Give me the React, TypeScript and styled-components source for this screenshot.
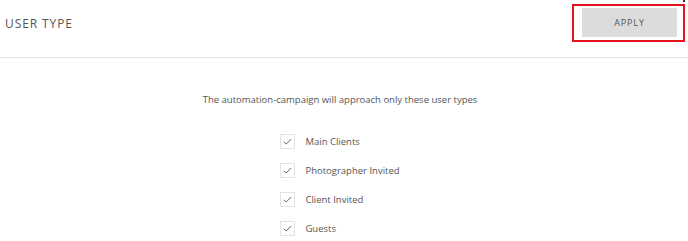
import styled, { createGlobalStyle } from 'styled-components';

const GlobalStyle = createGlobalStyle`
    body {
        margin: 0;
        background: #fff;
        font-family: 'Open Sans', 'Liberation Sans', sans-serif;
        color: #555;
    }
`;

const userTypes = ['Main Clients', 'Photographer Invited', 'Client Invited', 'Guests'];

const Check = () => (
    <svg width="9" height="7" viewBox="0 0 9 7" fill="none">
        <path d="M0.8 3.8 L3.2 6 L8.2 1" stroke="#666" strokeWidth="1" />
    </svg>
);

const App = () => {
    return (
        <Page>
            <GlobalStyle />
            <Header>
                <Title>USER TYPE</Title>
                <Highlight>
                    <ApplyButton>APPLY</ApplyButton>
                </Highlight>
                <Corner />
            </Header>
            <Content>
                <Intro>The automation-campaign will approach only these user types</Intro>
                <List>
                    {userTypes.map((type) => (
                        <Item key={type}>
                            <Box>
                                <Check />
                            </Box>
                            <Label>{type}</Label>
                        </Item>
                    ))}
                </List>
            </Content>
        </Page>
    );
};

export default App;

const Page = styled.div`
    width: 688px;
    height: 241px;
    overflow: hidden;
`;

const Header = styled.div`
    position: relative;
    height: 58px;
    display: flex;
    align-items: center;
    justify-content: space-between;
    padding: 0 3px 0 5px;
    box-sizing: border-box;
    border-bottom: 1px solid #e6e6e6;
    box-shadow: 0 1px 2px rgba(0, 0, 0, 0.03);
`;

const Title = styled.h1`
    margin: 0;
    margin-top: -10px;
    font-size: 12px;
    font-weight: 400;
    letter-spacing: 0.9px;
    color: #555;
`;

const Highlight = styled.div`
    margin-top: -12px;
    border: 2px solid #e3121b;
    padding: 2px 6px 3px 8px;
`;

const ApplyButton = styled.button`
    display: block;
    width: 95px;
    height: 29px;
    border: none;
    background: #dcdcdc;
    color: #555;
    font-family: 'Open Sans', 'Liberation Sans', sans-serif;
    font-size: 9px;
    letter-spacing: 0.9px;
    padding: 0;
    cursor: pointer;
`;

const Corner = styled.span`
    position: absolute;
    right: 3px;
    top: 0;
    width: 2px;
    height: 2px;
    background: #333;
`;

const Content = styled.div`
    display: flex;
    flex-direction: column;
    align-items: center;
    padding-top: 35px;
`;

const Intro = styled.p`
    margin: 0 8px 0 0;
    font-size: 9.5px;
    line-height: 14px;
    color: #555;
`;

const List = styled.div`
    display: flex;
    flex-direction: column;
    gap: 13px;
    margin-top: 26px;
    margin-right: 8px;
`;

const Item = styled.div`
    display: flex;
    align-items: center;
    gap: 10px;
    height: 16px;
`;

const Box = styled.span`
    display: flex;
    align-items: center;
    justify-content: center;
    width: 13px;
    height: 13px;
    border: 1px solid #e2e2e2;
`;

const Label = styled.span`
    font-size: 9.5px;
    color: #555;
`;
